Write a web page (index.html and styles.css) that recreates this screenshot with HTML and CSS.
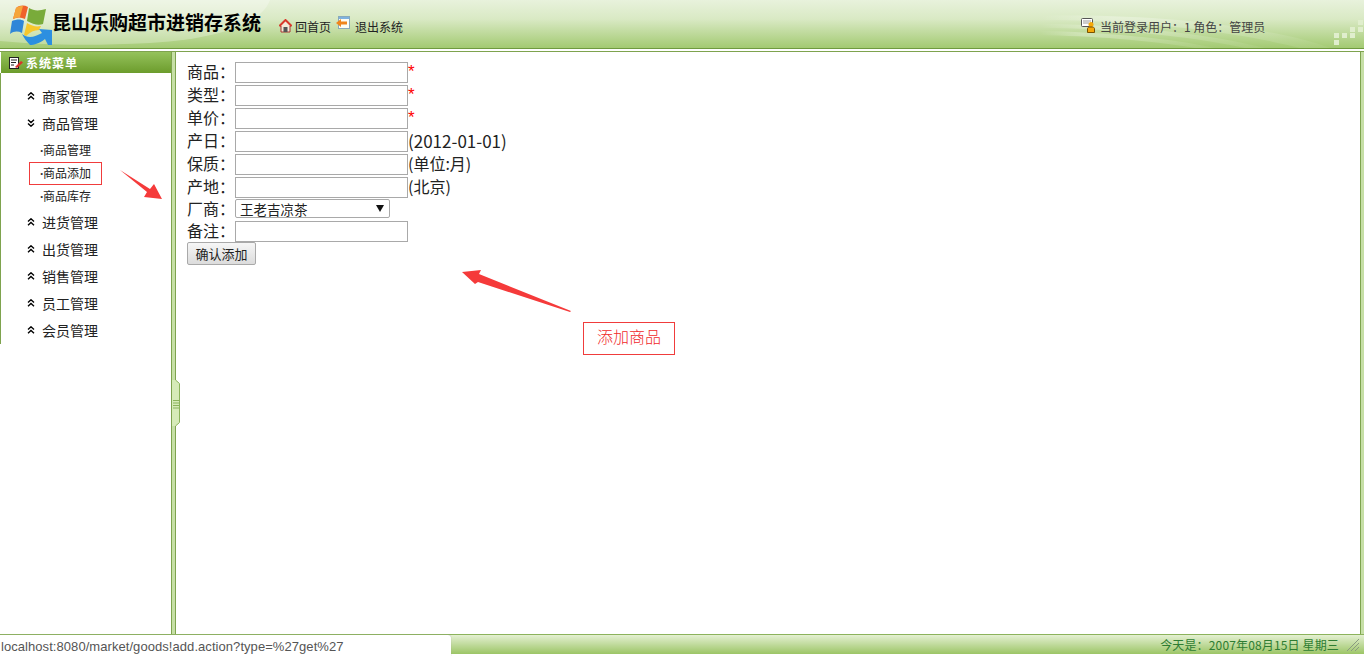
FILE: index.html
```html
<!DOCTYPE html>
<html lang="zh-CN">
<head>
  <meta charset="UTF-8" />
  <title>昆山乐购超市进销存系统</title>
  <link rel="stylesheet" href="styles.css">
</head>
<body>

  <!-- setas do menu -->
  <svg class="defs" width="0" height="0">
    <symbol id="chev-up" viewBox="0 0 8 8"><path d="M1 3.500L4 0.800L7 3.500M1 7.200L4 4.500L7 7.200" fill="none" stroke="#000" stroke-width="1.400"/></symbol>
    <symbol id="chev-down" viewBox="0 0 8 8"><path d="M1 0.800L4 3.500L7 0.800M1 4.500L4 7.200L7 4.500" fill="none" stroke="#000" stroke-width="1.400"/></symbol>
  </svg>

  <header class="top">
    <!-- faixas claras do fundo -->
    <svg class="top-bg" width="1364" height="48" viewBox="0 0 1364 48">
      <defs>
        <linearGradient id="fade" x1="0" x2="1" y1="0" y2="0">
          <stop offset="0" stop-color="#fff" stop-opacity="0"/>
          <stop offset="0.25" stop-color="#fff" stop-opacity="0.3"/>
          <stop offset="1" stop-color="#fff" stop-opacity="0.05"/>
        </linearGradient>
      </defs>
      <path d="M0 0H270C262 22 225 38 150 43C90 46 40 45 0 41Z" fill="#fff" opacity="0.28"/>
      <path d="M1040 16C1150 13 1270 26 1330 48H1300C1230 30 1130 20 1040 20Z" fill="url(#fade)"/>
      <path d="M1040 24C1120 24 1210 34 1265 48H1245C1190 36 1110 28 1040 28Z" fill="url(#fade)"/>
      <path d="M1040 31C1100 32 1170 38 1215 48H1195C1150 40 1090 36 1040 35Z" fill="url(#fade)"/>
      <g fill="#e0eecd">
        <rect x="1358" y="20" width="5" height="5"/>
        <rect x="1350" y="27" width="5" height="5"/>
        <rect x="1358" y="27" width="5" height="5"/>
        <rect x="1342" y="33" width="5" height="5"/>
        <rect x="1350" y="33" width="5" height="5"/>
        <rect x="1334" y="33" width="5" height="5"/>
        <rect x="1334" y="40" width="5" height="5"/>
      </g>
    </svg>

    <svg class="logo" width="44" height="46" viewBox="0 0 44 46">
      <path d="M7 7C11 4 15 4 19 6L16 18C12 16 8 16 4 18Z" fill="#f0622a"/>
      <path d="M7 7C10 5 12 5 14 5L11 16C9 16 6 17 4 18Z" fill="#f5a63a"/>
      <path d="M20 7C25 10 30 10 37 8L34 23C29 25 24 23 18 20Z" fill="#79ab3a"/>
      <path d="M3 20C8 18 12 18 15 20L13 32C9 30 5 30 1 33Z" fill="#2f86d8"/>
      <path d="M18 22C23 25 27 26 32 25L30 29C25 29 21 31 17 35L15 34Z" fill="#f7c72c"/>
      <path d="M13 33C19 38 26 36 33 32L30 28L43 29V44L39 44L36 38C31 42 25 44 21 44C18 41 15 37 13 33Z" fill="#2c8fe0"/>
    </svg>
    <h1 class="sys-title">昆山乐购超市进销存系统</h1>

    <nav class="top-links">
      <a href="#" class="home-link">
        <svg width="13" height="14" viewBox="0 0 13 14"><path d="M0.500 7L6.500 1L12.500 7H11V13H2V7Z" fill="#f4ead8" stroke="#a33"/><path d="M0.500 7L6.500 1L12.500 7" fill="none" stroke="#d9382b" stroke-width="2"/><rect x="4.500" y="8" width="4" height="5" fill="#555"/></svg>
        回首页
      </a>
      <a href="#" class="exit-link">
        <svg width="14" height="15" viewBox="0 0 14 15"><rect x="2.500" y="0.500" width="11" height="12" fill="#fdfdf4" stroke="#8ab"/><rect x="3" y="1" width="10" height="2" fill="#7fb2df"/><path d="M0 7L5 3V5.500H11V8.500H5V11Z" fill="#f0861c"/></svg>
        退出系统
      </a>
    </nav>

    <div class="user-info">
      <svg width="16" height="15" viewBox="0 0 16 15"><rect x="0.500" y="0.500" width="11" height="8" rx="1" fill="#fff" stroke="#555"/><path d="M2 3H10M2 5H8" stroke="#999"/><circle cx="10" cy="6.500" r="2.500" fill="#f5a90a"/><path d="M6.500 14.500V10.500C6.500 9.500 8 9 10 9C12 9 13.500 9.500 13.500 10.500V14.500Z" fill="#f5a90a" stroke="#7a5200"/></svg>
      <span>当前登录用户：1 角色：管理员</span>
    </div>
  </header>

  <div class="main">
    <aside class="sidebar">
      <div class="side-head">
        <svg width="14" height="12" viewBox="0 0 14 12"><rect x="0.500" y="0.500" width="9" height="11" fill="#fff" stroke="#222"/><path d="M2 3H8M2 5.500H7M2 8H5" stroke="#222"/><path d="M6 10L12 4L14 5.500L8 11Z" fill="#d9342b"/></svg>
        系统菜单
      </div>
      <ul class="menu">
        <li class="menu-item"><svg class="chev"><use href="#chev-up"/></svg>商家管理</li>
        <li class="menu-item"><svg class="chev"><use href="#chev-down"/></svg>商品管理</li>
        <li class="sub-list">
          <a href="#" class="sub-item"><span class="dot">·</span>商品管理</a>
          <a href="#" class="sub-item boxed"><span class="dot">·</span>商品添加</a>
          <a href="#" class="sub-item"><span class="dot">·</span>商品库存</a>
        </li>
        <li class="menu-item"><svg class="chev"><use href="#chev-up"/></svg>进货管理</li>
        <li class="menu-item"><svg class="chev"><use href="#chev-up"/></svg>出货管理</li>
        <li class="menu-item"><svg class="chev"><use href="#chev-up"/></svg>销售管理</li>
        <li class="menu-item"><svg class="chev"><use href="#chev-up"/></svg>员工管理</li>
        <li class="menu-item"><svg class="chev"><use href="#chev-up"/></svg>会员管理</li>
      </ul>
    </aside>

    <div class="splitter">
      <svg class="grip" width="8" height="46" viewBox="0 0 8 46">
        <path d="M0 0H4L7 3V43L4 46H0Z" fill="#d6ebb8"/>
        <path d="M3.500 0L7.500 3.500V42.500L3.500 46" fill="none" stroke="#8cb35c"/>
        <path d="M1 20.500H7M1 23H7M1 25.500H7M1 28H7" stroke="#8cb35c"/>
      </svg>
    </div>

    <main class="content">
      <form class="goods-form" onsubmit="return false;">
        <div class="row"><label>商品：</label><input type="text"><span class="req">*</span></div>
        <div class="row"><label>类型：</label><input type="text"><span class="req">*</span></div>
        <div class="row"><label>单价：</label><input type="text"><span class="req">*</span></div>
        <div class="row"><label>产日：</label><input type="text"><span class="hint-date">(2012-01-01)</span></div>
        <div class="row"><label>保质：</label><input type="text"><span>(单位:月)</span></div>
        <div class="row"><label>产地：</label><input type="text"><span>(北京)</span></div>
        <div class="row row-select"><label>厂商：</label><div class="fake-select">王老吉凉茶<i class="caret"></i></div></div>
        <div class="row row-note"><label>备注：</label><input type="text"></div>
        <button class="submit-btn" type="submit">确认添加</button>
      </form>
    </main>

    <!-- anotacoes vermelhas por cima da tela -->
    <svg class="arrow arrow-side" width="44" height="32" viewBox="0 0 44 32">
      <path d="M0 0L30 19L34 14L42 29L24 27L27 22Z" fill="#f53a3a"/>
    </svg>
    <svg class="arrow arrow-main" width="110" height="44" viewBox="0 0 110 44">
      <path d="M0 2L19 0L17 4L109 41L108 42L16 12L13 14Z" fill="#f53a3a"/>
    </svg>
    <div class="note-box">添加商品</div>
  </div>

  <footer class="bottom">
    <span class="today">今天是：2007年08月15日 星期三</span>
    <svg class="resize" width="14" height="14" viewBox="0 0 14 14"><path d="M1 13L13 1M5 13L13 5M9 13L13 9" stroke="#8a9a80"/></svg>
  </footer>
  <div class="status-tip">localhost:8080/market/goods!add.action?type=%27get%27</div>

</body>
</html>
```

FILE: styles.css
```css
body {
  margin: 0;
  width: 1364px;
  height: 656px;
  overflow: hidden;
  background-color: #fff;
  font-family: "Noto Sans CJK SC", "Liberation Sans", sans-serif;
  color: #222;
  display: flex;
  flex-direction: column;
  position: relative;
}

a {
  color: inherit;
  text-decoration: none;
}

.defs {
  position: absolute;
}

/* Topo */
.top {
  height: 48px;
  flex: none;
  position: relative;
  display: flex;
  align-items: center;
  background: linear-gradient(#e8f2dc, #d9e9c4 40%, #a3ca72);
  border-bottom: 1px solid #6f9a3f;
  overflow: hidden;
}

.top-bg {
  position: absolute;
  left: 0;
  top: 0;
}

.logo {
  position: relative;
  margin-left: 9px;
  flex: none;
}

.sys-title {
  position: relative;
  margin: 0 0 0 -1px;
  width: 226px;
  font-size: 19px;
  font-weight: bold;
  color: #000;
  white-space: nowrap;
  line-height: 24px;
  padding-bottom: 4px;
}

.top-links {
  position: relative;
  display: flex;
  gap: 5px;
  font-size: 12px;
  color: #222;
  margin-top: 4px;
  margin-left: 1px;
}

.top-links a {
  display: flex;
  align-items: center;
  gap: 3px;
}

.exit-link svg {
  margin-top: -6px;
  margin-right: 2px;
}

.user-info {
  position: absolute;
  left: 1081px;
  top: 18px;
  display: flex;
  align-items: flex-start;
  gap: 3px;
  font-size: 12px;
  color: #444;
  white-space: nowrap;
}

/* Area principal */
.main {
  flex: 1;
  min-height: 0;
  position: relative;
  display: flex;
  margin-top: 2px;
  border-top: 1px solid #7ea34e;
}

.sidebar {
  width: 170px;
  flex: none;
  margin-left: 1px;
  border-right: 1px solid #7ea34e;
  font-size: 14px;
}

.side-head {
  height: 21px;
  display: flex;
  align-items: center;
  gap: 3px;
  padding-left: 8px;
  background: linear-gradient(#95c25c, #6c9c2c);
  color: #fff;
  font-size: 12px;
  font-weight: bold;
  letter-spacing: 1px;
}

.menu {
  list-style: none;
  margin: 0 0 0 -1px;
  padding: 9px 0 0 0;
  height: 262px;
  border-left: 1px solid #7ea34e;
}

.menu-item {
  height: 27px;
  line-height: 26px;
  padding-left: 26px;
  color: #222;
  display: flex;
  align-items: center;
}

.chev {
  width: 8px;
  height: 8px;
  margin-right: 7px;
  flex: none;
}

.sub-list {
  display: flex;
  flex-direction: column;
  padding: 3px 0 0 28px;
}

.sub-item {
  display: block;
  width: 73px;
  height: 23px;
  line-height: 22px;
  font-size: 12px;
  box-sizing: border-box;
  padding-left: 10px;
  color: #222;
}

.sub-item.boxed {
  border: 1px solid #f03c3c;
  padding-left: 9px;
  line-height: 20px;
}

.dot {
  font-family: "Liberation Sans", sans-serif;
  font-weight: bold;
  display: inline-block;
  width: 3px;
  margin-left: 1px;
  color: #333;
}

.splitter {
  width: 3px;
  flex: none;
  background-color: #c6dfa6;
  border-right: 1px solid #7ea34e;
  position: relative;
}

.grip {
  position: absolute;
  left: 0;
  top: 328px;
}

.content {
  flex: 1;
  min-width: 0;
  padding: 10px 0 0 11px;
  border-right: 1px solid #7ea34e;
  margin-right: 3px;
  box-shadow: 3px 0 0 #c6dfa6;
}

/* Formulario */
.goods-form {
  display: flex;
  flex-direction: column;
  align-items: flex-start;
  font-size: 16px;
  color: #222;
}

.row {
  height: 23px;
  display: flex;
  align-items: flex-start;
  line-height: 19px;
  white-space: nowrap;
}

.row label {
  width: 48px;
}

.row input {
  width: 173px;
  height: 21px;
  box-sizing: border-box;
  border: 1px solid #a9a9a9;
  padding: 1px 2px;
  margin: 0;
  background-color: #fff;
}

.row-select {
  height: 22px;
  margin-top: -1px;
}

.row-note {
  height: 21px;
}

.req {
  color: #f00;
  font-family: "Liberation Sans", sans-serif;
  font-size: 17px;
}

.hint-date {
  font-size: 17px;
}

.fake-select {
  width: 155px;
  height: 19px;
  box-sizing: border-box;
  border: 1px solid #a9a9a9;
  border-radius: 2px;
  font-size: 13.500px;
  line-height: 18px;
  padding-left: 4px;
  position: relative;
}

.caret {
  position: absolute;
  right: 5px;
  top: 5px;
  border-left: 4px solid transparent;
  border-right: 4px solid transparent;
  border-top: 7px solid #111;
}

.submit-btn {
  width: 69px;
  height: 23px;
  padding: 0;
  border: 1px solid #a9a9a9;
  border-radius: 2px;
  background: linear-gradient(#f6f6f6, #dcdcdc);
  font-family: inherit;
  font-size: 13px;
  color: #222;
}

/* Anotacoes */
.arrow {
  position: absolute;
}

.arrow-side {
  left: 120px;
  top: 118px;
}

.arrow-main {
  left: 462px;
  top: 218px;
}

.note-box {
  position: absolute;
  left: 583px;
  top: 270px;
  width: 92px;
  height: 33px;
  box-sizing: border-box;
  border: 1px solid #f03c3c;
  color: #f02a2a;
  font-size: 16px;
  font-weight: 300;
  line-height: 27px;
  text-align: center;
}

/* Rodape */
.bottom {
  height: 19px;
  flex: none;
  display: flex;
  align-items: center;
  justify-content: flex-end;
  gap: 7px;
  border-top: 1px solid #8cb35c;
  margin-bottom: 2px;
  background: linear-gradient(#e4f0d2, #9cc566);
  font-size: 12px;
  letter-spacing: 0.150px;
  color: #2e7d32;
  padding-right: 4px;
}

.status-tip {
  position: absolute;
  left: 0;
  bottom: 0;
  width: 451px;
  height: 21px;
  box-sizing: border-box;
  background-color: #fff;
  border-top-right-radius: 3px;
  box-shadow: 0 0 1px #999;
  font-family: "Liberation Sans", sans-serif;
  font-size: 13px;
  letter-spacing: 0.060px;
  line-height: 23px;
  padding-left: 1px;
  color: #555;
  white-space: nowrap;
}
```
